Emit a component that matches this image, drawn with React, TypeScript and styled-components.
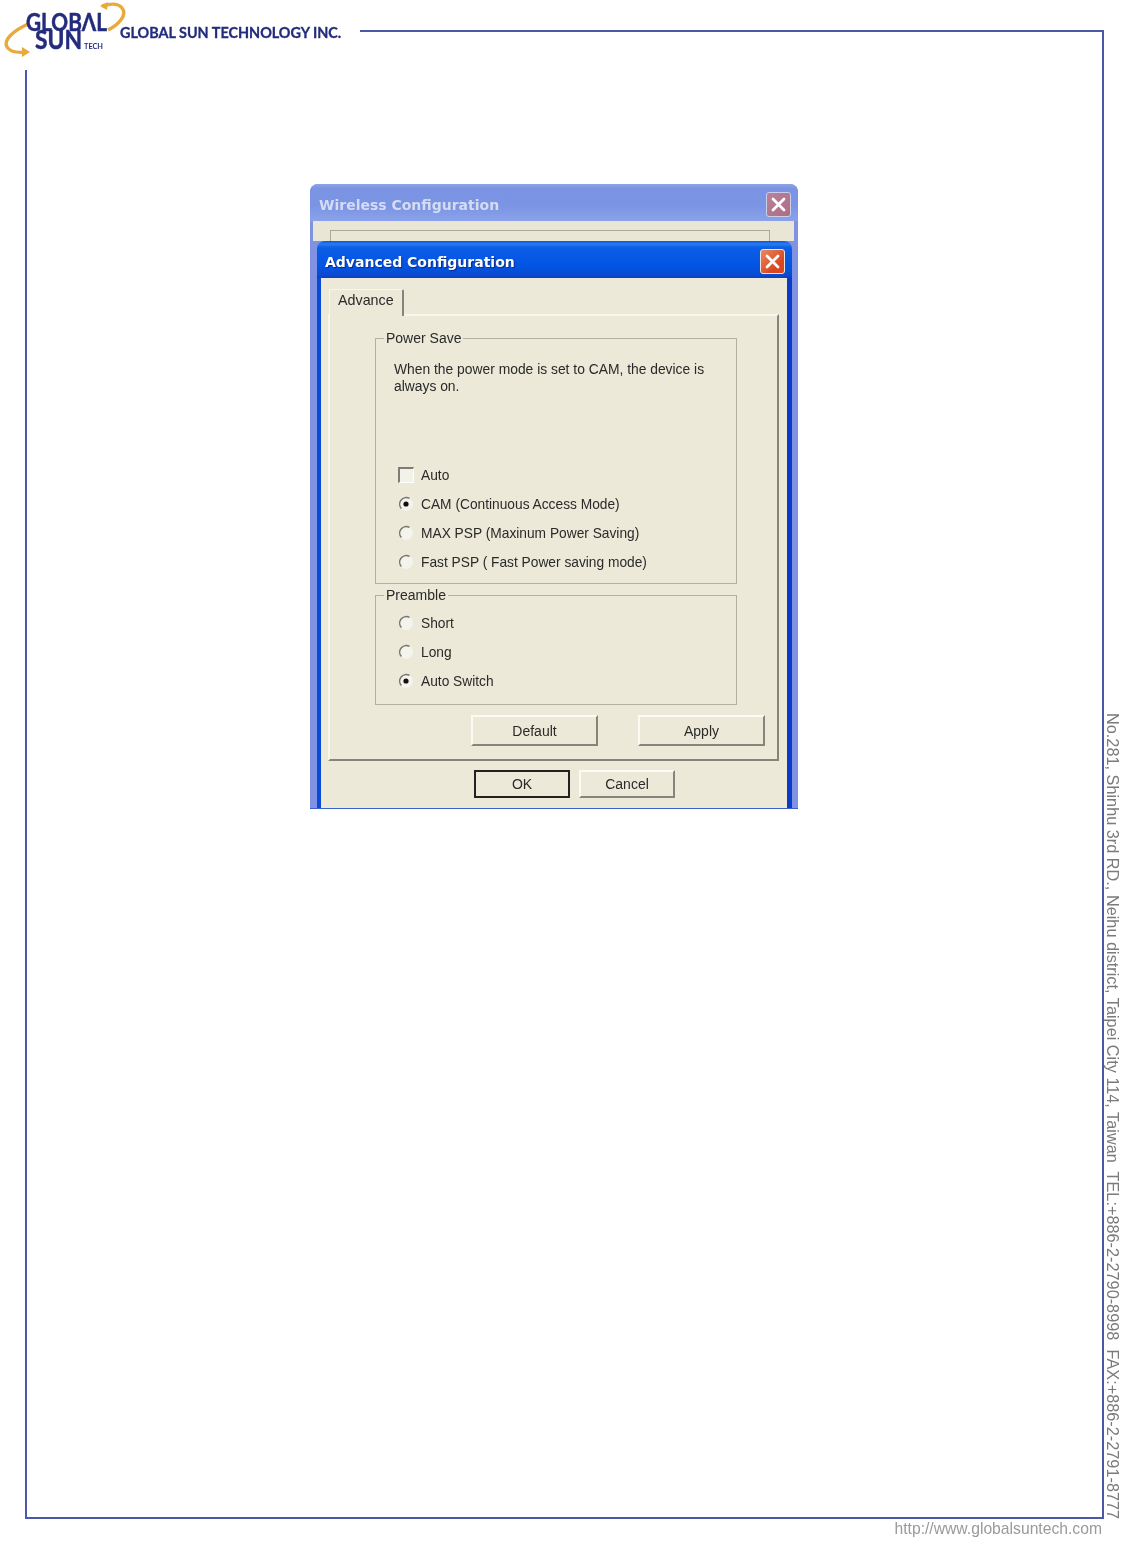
import React from "react";
import styled, { createGlobalStyle } from "styled-components";

const Global = createGlobalStyle`
  html, body { margin: 0; padding: 0; background: #fff; }
  * { box-sizing: border-box; }
`;

const Page = styled.div`
  position: relative;
  width: 1124px;
  height: 1541px;
  overflow: hidden;
  padding: 30px 0 0 25px;
  background: #fff;
  font-family: "Liberation Sans", Arial, sans-serif;
  filter: blur(0.5px);
`;

const SheetRow = styled.div`
  display: flex;
  align-items: stretch;
`;

const Sheet = styled.div`
  flex: none;
  width: 1079px;
  height: 1489px;
  border: 2px solid #4d57a8;
  padding: 152px 0 0 283px;
`;

const SideText = styled.div`
  writing-mode: vertical-rl;
  display: flex;
  justify-content: flex-end;
  height: 1489px;
  width: 17px;
  font-size: 16.3px;
  line-height: 17px;
  color: #7b7b7b;
  white-space: pre;
`;

const FooterLink = styled.div`
  width: 1077px;
  margin-top: 1px;
  text-align: right;
  font-size: 15.7px;
  line-height: 18px;
  color: #9a9a9a;
`;

const LogoBlock = styled.div`
  position: absolute;
  top: 0;
  left: 0;
  width: 360px;
  height: 70px;
  background: #fff;
  display: flex;
  align-items: flex-start;
`;

const LogoMark = styled.svg`
  flex: none;
  width: 132px;
  height: 62px;
  margin-right: -12px;
`;

const CompanyName = styled.span`
  margin-top: 23px;
  font-family: Lato, "Open Sans", sans-serif;
  font-weight: 700;
  font-size: 14.4px;
  line-height: 20px;
  color: #232c7c;
  -webkit-text-stroke: 0.3px #232c7c;
  white-space: nowrap;
`;

const BackWindow = styled.div`
  width: 488px;
  height: 625px;
  display: flex;
  flex-direction: column;
  background: #7f93e2;
  border-radius: 8px 8px 0 0;
  border-bottom: 1px solid #3a62cc;
  overflow: hidden;
`;

const BackTitle = styled.div`
  flex: none;
  height: 37px;
  display: flex;
  align-items: center;
  justify-content: space-between;
  padding: 4px 7px 0 9px;
  background: linear-gradient(180deg, #8ea4e8 0%, #7a93e3 12%, #7b95e4 60%, #8ba2ea 100%);
`;

const BackTitleText = styled.span`
  font-family: "DejaVu Sans", sans-serif;
  font-weight: 700;
  font-size: 14px;
  color: #d5dcf2;
  white-space: nowrap;
`;

const CloseButton = styled.div<{ $faded?: boolean }>`
  flex: none;
  width: 25px;
  height: 25px;
  display: flex;
  align-items: center;
  justify-content: center;
  border-radius: 3px;
  border: 1px solid ${(p) => (p.$faded ? "#c9cfe8" : "#f3e3dc")};
  background: ${(p) =>
    p.$faded
      ? "linear-gradient(135deg, #b9829a, #ad6c84)"
      : "linear-gradient(135deg, #e98a62, #d9471f 70%)"};
`;

const BackStrip = styled.div`
  flex: none;
  height: 20px;
  margin: 0 4px 0 3px;
  padding: 9px 24px 0 17px;
  background: #e9e6d6;
`;

const BackGroupEdge = styled.div`
  height: 11px;
  border: 1px solid #a9ab98;
  border-bottom: none;
`;

const FrontWindow = styled.div`
  flex: 1;
  display: flex;
  flex-direction: column;
  width: 475px;
  margin-left: 7px;
  border-radius: 8px 8px 0 0;
  overflow: hidden;
`;

const FrontTitle = styled.div`
  flex: none;
  height: 37px;
  display: flex;
  align-items: center;
  justify-content: space-between;
  padding: 4px 7px 0 8px;
  background: linear-gradient(180deg, #0a56e0 0%, #2a7cf0 8%, #0b5ee6 18%, #0353e2 70%, #0a4ad0 92%, #0a3fb8 100%);
`;

const FrontTitleText = styled.span`
  font-family: "DejaVu Sans", sans-serif;
  font-weight: 700;
  font-size: 14px;
  color: #fff;
  text-shadow: 1px 1px 1px #0a2a88;
  white-space: nowrap;
`;

const Client = styled.div`
  flex: 1;
  display: flex;
  flex-direction: column;
  padding: 11px 8px 0 7px;
  background: #ece9d8;
  border-left: 4px solid #0a4ad8;
  border-right: 5px solid #0a3cc8;
`;

const Tab = styled.div`
  position: relative;
  z-index: 1;
  align-self: flex-start;
  width: 75px;
  height: 27px;
  margin: 0 0 -2px 1px;
  padding: 2px 0 0 8px;
  font-size: 14.3px;
  line-height: 16px;
  color: #2a2a2a;
  background: #ece9d8;
  border-top: 1px solid #f6f5ee;
  border-left: 1px solid #f6f5ee;
  border-right: 2px solid #85857c;
  border-radius: 2px 2px 0 0;
`;

const TabPanel = styled.div`
  width: 451px;
  height: 447px;
  padding: 14px 12px 0 45px;
  border-top: 2px solid #f7f6ef;
  border-left: 2px solid #f7f6ef;
  border-right: 2px solid #85857c;
  border-bottom: 2px solid #85857c;
`;

const Group = styled.fieldset<{ $height: number }>`
  width: 362px;
  height: ${(p) => p.$height}px;
  margin: 0 0 3px;
  padding: 0;
  min-width: 0;
  border: 1px solid #b0b1a0;
  border-radius: 0;
  &:last-of-type {
    margin-bottom: 0;
  }
`;

const GroupLegend = styled.legend`
  margin-left: 8px;
  padding: 0 2px;
  font-size: 14px;
  line-height: 17px;
  color: #2a2a2a;
`;

const Description = styled.p`
  width: 335px;
  margin: 14px 0 66px 18px;
  font-size: 13.85px;
  line-height: 17px;
  color: #2a2a2a;
`;

const OptionList = styled.div<{ $top?: number }>`
  padding: ${(p) => p.$top ?? 0}px 0 0 22px;
`;

const OptionRow = styled.div`
  display: flex;
  align-items: center;
  gap: 7px;
  height: 29px;
  font-size: 13.75px;
  color: #2a2a2a;
  white-space: nowrap;
`;

const CheckBox = styled.span`
  flex: none;
  width: 16px;
  height: 16px;
  padding: 0;
  margin-top: -1px;
  background: #f3f2ea;
  border-top: 2px solid #7d7d76;
  border-left: 2px solid #7d7d76;
  border-right: 1px solid #fff;
  border-bottom: 1px solid #fff;
`;

const RadioIcon = styled.svg`
  flex: none;
  width: 16px;
  height: 16px;
  margin-top: -1px;
`;

const ActionRow = styled.div`
  display: flex;
  justify-content: flex-end;
  gap: 40px;
  margin-top: 10px;
`;

const PushButton = styled.button<{ $w: number; $h: number; $default?: boolean }>`
  flex: none;
  width: ${(p) => p.$w}px;
  height: ${(p) => p.$h}px;
  padding: 0;
  background: #ece9d8;
  font-family: inherit;
  font-size: 14px;
  color: #2a2a2a;
  border-radius: 0;
  border-style: solid;
  border-width: 2px;
  border-color: ${(p) =>
    p.$default ? "#222" : "#fbfaf4 #85857c #85857c #fbfaf4"};
`;

const DialogButtons = styled.div`
  display: flex;
  gap: 9px;
  margin: 9px 0 0 146px;
`;

const CloseGlyph = () => (
  <svg width="15" height="15" viewBox="0 0 15 15">
    <path d="M2 2 L13 13 M13 2 L2 13" stroke="#fff" strokeWidth="2.8" strokeLinecap="round" />
  </svg>
);

const Radio = ({ on }: { on?: boolean }) => (
  <RadioIcon viewBox="0 0 16 16">
    <circle cx="8" cy="8" r="7" fill="#f4f3ec" />
    <path d="M11.5 2.4 A6.6 6.6 0 0 0 3.4 12.6" fill="none" stroke="#77776f" strokeWidth="1.5" />
    {on && <circle cx="8" cy="8" r="2.6" fill="#111" />}
  </RadioIcon>
);

const Logo = () => (
  <LogoMark viewBox="0 0 132 62">
    <path d="M28 24 C13 31 3 40 7 47 C10 52 18 53 27 52" fill="none" stroke="#e8aa3c" strokeWidth="3.4" />
    <path d="M108 30 C118 25 128 15 122 8 C119 4 112 3 102 6" fill="none" stroke="#e8aa3c" strokeWidth="3.4" />
    <polygon points="22,47 30,52 22,57" fill="#e8aa3c" />
    <polygon points="108,2 100,6 107,10" fill="#e8aa3c" />
    <text x="26" y="31" textLength="81" lengthAdjust="spacingAndGlyphs" fontFamily="Lato, sans-serif" fontWeight="700" fontSize="25" stroke="#232c7c" strokeWidth="0.5" fill="#232c7c">GLOBΛL</text>
    <text x="35" y="49" textLength="47" lengthAdjust="spacingAndGlyphs" fontFamily="Lato, sans-serif" fontWeight="700" fontSize="26" stroke="#232c7c" strokeWidth="0.5" fill="#232c7c">SUN</text>
    <text x="84" y="49" textLength="19" lengthAdjust="spacingAndGlyphs" fontFamily="Lato, sans-serif" fontWeight="700" fontSize="8" fill="#232c7c">TECH</text>
  </LogoMark>
);

export default function App() {
  return (
    <>
      <Global />
      <Page>
        <LogoBlock>
          <Logo />
          <CompanyName>GLOBAL SUN TECHNOLOGY INC.</CompanyName>
        </LogoBlock>
        <SheetRow>
          <Sheet>
            <BackWindow>
              <BackTitle>
                <BackTitleText>Wireless Configuration</BackTitleText>
                <CloseButton $faded><CloseGlyph /></CloseButton>
              </BackTitle>
              <BackStrip><BackGroupEdge /></BackStrip>
              <FrontWindow>
                <FrontTitle>
                  <FrontTitleText>Advanced Configuration</FrontTitleText>
                  <CloseButton><CloseGlyph /></CloseButton>
                </FrontTitle>
                <Client>
                  <Tab>Advance</Tab>
                  <TabPanel>
                    <Group $height={254}>
                      <GroupLegend>Power Save</GroupLegend>
                      <Description>When the power mode is set to CAM, the device is always on.</Description>
                      <OptionList>
                        <OptionRow><CheckBox />Auto</OptionRow>
                        <OptionRow><Radio on />CAM (Continuous Access Mode)</OptionRow>
                        <OptionRow><Radio />MAX PSP (Maxinum Power Saving)</OptionRow>
                        <OptionRow><Radio />Fast PSP ( Fast Power saving mode)</OptionRow>
                      </OptionList>
                    </Group>
                    <Group $height={118}>
                      <GroupLegend>Preamble</GroupLegend>
                      <OptionList $top={5}>
                        <OptionRow><Radio />Short</OptionRow>
                        <OptionRow><Radio />Long</OptionRow>
                        <OptionRow><Radio on />Auto Switch</OptionRow>
                      </OptionList>
                    </Group>
                    <ActionRow>
                      <PushButton $w={127} $h={31}>Default</PushButton>
                      <PushButton $w={127} $h={31}>Apply</PushButton>
                    </ActionRow>
                  </TabPanel>
                  <DialogButtons>
                    <PushButton $w={96} $h={28} $default>OK</PushButton>
                    <PushButton $w={96} $h={28}>Cancel</PushButton>
                  </DialogButtons>
                </Client>
              </FrontWindow>
            </BackWindow>
          </Sheet>
          <SideText><span>{"No.281, Shinhu 3rd RD., Neihu district, Taipei City 114, Taiwan  TEL:+886-2-2790-8998  FAX:+886-2-2791-8777"}</span></SideText>
        </SheetRow>
        <FooterLink>http://www.globalsuntech.com</FooterLink>
      </Page>
    </>
  );
}
